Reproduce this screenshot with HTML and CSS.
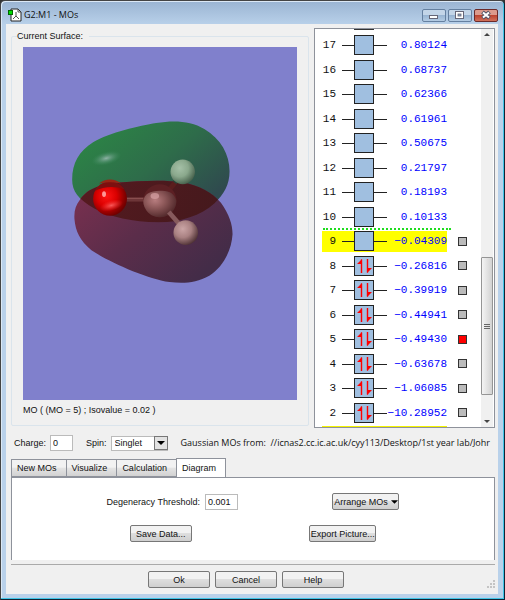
FILE: index.html
```html
<!DOCTYPE html>
<html lang="en">
<head>
  <meta charset="UTF-8" />
  <meta name="viewport" content="width=device-width, initial-scale=1.0" />
  <title>G2:M1 - MOs</title>
  <link rel="stylesheet" href="styles.css">
</head>
<body>

  <div class="window">
    <header class="titlebar">
      <svg class="app-icon" width="14" height="14" viewBox="0 0 14 14">
        <path d="M3 1h7l3 3v9H3z" fill="#fff" stroke="#222" />
        <path d="M10 1v3h3M8 4v4M8 8l-3 3M8 8l3 3" fill="none" stroke="#555" />
        <rect x="0.5" y="2.5" width="4" height="4" fill="#0d0" stroke="#060" />
      </svg>
      <h1>G2:M1 - MOs</h1>
      <div class="window-buttons">
        <button type="button" aria-label="Minimize">
          <svg width="12" height="10" viewBox="0 0 12 10"><rect x="1.5" y="5.5" width="8" height="3" fill="#fff" stroke="#667" /></svg>
        </button>
        <button type="button" aria-label="Maximize">
          <svg width="12" height="10" viewBox="0 0 12 10"><rect x="1.5" y="1.5" width="8" height="7" fill="#fff" stroke="#667" /><rect x="4" y="4" width="3" height="2" fill="#8ba7c4" stroke="#667" stroke-width="0.8" /></svg>
        </button>
        <button type="button" class="close" aria-label="Close">
          <svg width="12" height="10" viewBox="0 0 12 10"><path d="M2.5 2l7 6M9.5 2l-7 6" stroke="#535666" stroke-width="4" /><path d="M3 2.4l6 5.2M9 2.4l-6 5.2" stroke="#fff" stroke-width="2" /></svg>
        </button>
      </div>
    </header>

    <main class="client">
      <div class="top">
        <fieldset class="surface">
          <legend>Current Surface:</legend>
          <div class="view">
            <svg viewBox="0 0 275 353" role="img" aria-label="Molecular orbital 5">
              <defs>
                <linearGradient id="green" x1="0.1" y1="0.2" x2="0.85" y2="0.8">
                  <stop offset="0" stop-color="#2c8246" />
                  <stop offset="0.5" stop-color="#2e6c4a" />
                  <stop offset="1" stop-color="#2f4a4e" />
                </linearGradient>
                <linearGradient id="purple" x1="0" y1="0.1" x2="0.9" y2="0.8">
                  <stop offset="0" stop-color="#7a304f" />
                  <stop offset="0.5" stop-color="#5b2d4a" />
                  <stop offset="1" stop-color="#432c48" />
                </linearGradient>
                <linearGradient id="overlap" x1="0" y1="0" x2="1" y2="0.3">
                  <stop offset="0" stop-color="#571a20" />
                  <stop offset="1" stop-color="#43191c" />
                </linearGradient>
                <radialGradient id="shine">
                  <stop offset="0" stop-color="#8fb3a5" />
                  <stop offset="0.4" stop-color="#6da188" stop-opacity="0.6" />
                  <stop offset="1" stop-color="#3c8c5c" stop-opacity="0" />
                </radialGradient>
                <radialGradient id="oxygen" cx="0.4" cy="0.42" r="0.6">
                  <stop offset="0" stop-color="#ff1414" />
                  <stop offset="0.5" stop-color="#d90000" />
                  <stop offset="1" stop-color="#700000" />
                </radialGradient>
                <radialGradient id="glow">
                  <stop offset="0" stop-color="#ff7070" stop-opacity="0.8" />
                  <stop offset="1" stop-color="#ff3030" stop-opacity="0" />
                </radialGradient>
                <radialGradient id="carbon" cx="0.36" cy="0.36" r="0.7">
                  <stop offset="0" stop-color="#b77d7f" />
                  <stop offset="0.4" stop-color="#8f5a5b" />
                  <stop offset="1" stop-color="#4d2527" />
                </radialGradient>
                <radialGradient id="h1" cx="0.38" cy="0.35" r="0.7">
                  <stop offset="0" stop-color="#a5c0a7" />
                  <stop offset="0.5" stop-color="#8aa88c" />
                  <stop offset="1" stop-color="#425c48" />
                </radialGradient>
                <radialGradient id="h2" cx="0.38" cy="0.35" r="0.7">
                  <stop offset="0" stop-color="#cba5a6" />
                  <stop offset="0.5" stop-color="#a98182" />
                  <stop offset="1" stop-color="#4c2f32" />
                </radialGradient>
                <path id="upper" d="M67 240C67 190 88 155 130 128C180 98 270 78 320 70C375 61 425 64 465 88C515 118 541 165 541 215C541 255 524 285 495 312C455 348 390 370 325 369C250 368 180 352 135 328C85 300 67 275 67 240Z" />
                <path id="lower" d="M90 302C112 270 140 258 200 250C270 245 340 240 400 249C450 258 490 280 515 310C540 345 550 375 550 405C547 455 520 505 480 530C440 553 400 553 360 549C290 538 180 490 125 453C90 425 77 395 74 360C72 335 78 318 90 302Z" />
                <clipPath id="inUpper"><use href="#upper" /></clipPath>
              </defs>
              <g transform="translate(27 53) scale(0.3333)">
                <use href="#upper" fill="url(#green)" />
                <ellipse cx="170" cy="176" rx="46" ry="20" transform="rotate(-14 170 176)" fill="url(#shine)" />
                <use href="#lower" fill="url(#purple)" />
                <use href="#lower" fill="url(#overlap)" clip-path="url(#inUpper)" />
                <path d="M230 300h54" stroke="#6d3538" stroke-width="13" />
                <path d="M230 297h54" stroke="#8d5052" stroke-width="3" />
                <path d="M360 270l18 -22" stroke="#5a1d1d" stroke-width="15" />
                <path d="M376 250l9 -12" stroke="#284438" stroke-width="13" />
                <circle cx="400" cy="217" r="37" fill="url(#h1)" />
                <circle cx="331" cy="304" r="50" fill="#5c2024" />
                <path d="M281 304C286 283 300 275 331 274C360 272 375 282 381 304A50 50 0 0 1 281 304Z" fill="url(#carbon)" />
                <ellipse cx="316" cy="290" rx="13" ry="9" fill="#d9a3a5" opacity="0.7" />
                <path d="M358 338l32 37" stroke="#875a5c" stroke-width="14" />
                <circle cx="409" cy="400" r="37" fill="url(#h2)" />
                <circle cx="181" cy="298" r="51" fill="url(#oxygen)" />
                <path d="M136 274A51 51 0 0 1 224 270C195 258 160 262 136 274Z" fill="#7d1010" />
                <path d="M148 252A51 51 0 0 1 214 252Q181 244 148 252Z" fill="#992515" />
                <ellipse cx="163" cy="284" rx="6" ry="9" fill="#ffb0b0" opacity="0.85" />
                <ellipse cx="185" cy="318" rx="36" ry="16" transform="rotate(-15 185 318)" fill="url(#glow)" />
              </g>
            </svg>
          </div>
          <p class="caption">MO ( (MO = 5) ; Isovalue = 0.02 )</p>
        </fieldset>

        <div class="orbitals">
          <div class="list">
            <div class="cut-top"></div>
            <ul id="moList"></ul>
            <div class="cut-bottom"></div>
          </div>
          <div class="scrollbar">
            <svg width="12" height="12" viewBox="0 0 12 12"><path d="M3 7l3 -3l3 3z" fill="#444" /></svg>
            <div class="thumb"><i></i><i></i><i></i></div>
            <svg width="12" height="12" viewBox="0 0 12 12"><path d="M3 5l3 3l3 -3z" fill="#444" /></svg>
          </div>
        </div>
      </div>

      <div class="state">
        <label for="charge">Charge:</label>
        <input type="text" id="charge" class="charge" value="0" />
        <label for="spin">Spin:</label>
        <div class="combo">
          <select id="spin">
            <option>Singlet</option>
            <option>Triplet</option>
          </select>
          <span class="arrow"><svg width="8" height="4" viewBox="0 0 8 4"><path d="M0 0h8l-4 4z" /></svg></span>
        </div>
        <p class="source">Gaussian MOs from:&nbsp; //icnas2.cc.ic.ac.uk/cyy113/Desktop/1st year lab/Johr</p>
      </div>

      <div class="tabs" role="tablist">
        <button type="button" role="tab">New MOs</button>
        <button type="button" role="tab">Visualize</button>
        <button type="button" role="tab">Calculation</button>
        <button type="button" role="tab" class="active" aria-selected="true">Diagram</button>
      </div>
      <section class="panel">
        <div class="panel-row">
          <div class="field">
            <label for="threshold">Degeneracy Threshold:</label>
            <input type="text" id="threshold" class="threshold" value="0.001" />
          </div>
          <button type="button" class="btn wide">Arrange MOs <svg width="7" height="4" viewBox="0 0 8 4"><path d="M0 0h8l-4 4z" /></svg></button>
        </div>
        <div class="panel-row">
          <button type="button" class="btn">Save Data...</button>
          <button type="button" class="btn wide">Export Picture...</button>
        </div>
      </section>

      <footer class="actions">
        <div class="action-buttons">
          <button type="button" class="btn">Ok</button>
          <button type="button" class="btn">Cancel</button>
          <button type="button" class="btn">Help</button>
        </div>
        <svg class="grip" width="8" height="8" viewBox="0 0 8 8"><path d="M6 0h2v2h-2zM3 3h2v2h-2zM6 3h2v2h-2zM0 6h2v2h-2zM3 6h2v2h-2zM6 6h2v2h-2z" fill="#c4c4c4" /></svg>
      </footer>
    </main>
  </div>

  <script>
    const orbitals = [
      [17, "0.80124"], [16, "0.68737"], [15, "0.62366"], [14, "0.61961"],
      [13, "0.50675"], [12, "0.21797"], [11, "0.18193"], [10, "0.10133"],
      [9, "-0.04309"], [8, "-0.26816"], [7, "-0.39919"], [6, "-0.44941"],
      [5, "-0.49430"], [4, "-0.63678"], [3, "-1.06085"], [2, "-10.28952"]
    ];
    const LUMO = 9;

    // Spin up / spin down half arrows for a filled orbital
    const electrons =
      '<path d="M19.5 17V3.5M25.5 3v13.5" stroke="#f00" stroke-width="1.4" />' +
      '<path d="M20 3v5l-5 0zM25 17v-5l5 0z" fill="#f00" />';

    const list = document.getElementById("moList");
    orbitals.forEach(function ([n, energy]) {
      const li = document.createElement("li");
      if (n === LUMO) li.className = "lumo";
      li.innerHTML =
        '<div class="level"><span class="num">' + n + '</span>' +
        '<svg width="45" height="20" viewBox="0 0 45 20">' +
        '<path d="M0 10.5h45" stroke="#222" />' +
        '<rect x="12.5" y="0.5" width="19" height="19" fill="#a0bfe0" stroke="#222" />' +
        (n < LUMO ? electrons : "") + '</svg>' +
        '<span class="energy">' + energy.replace("-", "\u2212") + '</span></div>' +
        (n <= LUMO ? '<input type="radio" name="mo" aria-label="MO ' + n + '"' + (n === 5 ? " checked" : "") + ' />' : "");
      list.appendChild(li);
    });
  </script>

</body>
</html>
```

FILE: styles.css
```css
* {
  box-sizing: border-box;
}

body {
  margin: 0;
  font-family: "Liberation Sans", Arial, sans-serif;
  font-size: 9px;
  line-height: 12px;
  color: #111;
  background: #333;
}

h1, p, ul {
  margin: 0;
  padding: 0;
}

button, input, select {
  font: inherit;
  color: inherit;
}

svg {
  display: block;
  flex: none;
}

/* Window frame */
.window {
  display: flex;
  flex-direction: column;
  min-height: 100vh;
  padding: 0 5px 5px;
  border: 1px solid #444;
  border-right-color: #123;
  border-bottom-color: #123;
  border-radius: 5px 5px 0 0;
  background: linear-gradient(#9ab4d2, #b9d1ea 24px);
  box-shadow: inset -1px -1px #3fc4e6, inset 1px 1px #dbe8f5;
}

.titlebar {
  display: flex;
  align-items: center;
  height: 23px;
  padding: 5px 1px 0 2px;
}

.titlebar h1 {
  flex: 1;
  margin-left: 2px;
  font: 9px/14px "Open Sans", sans-serif;
}

.window-buttons {
  display: flex;
  gap: 2px;
}

.window-buttons button {
  display: flex;
  align-items: center;
  justify-content: center;
  width: 24px;
  height: 13px;
  padding: 0;
  border: 1px solid #6580a0;
  border-radius: 2px;
  background: linear-gradient(#c3d5e8 45%, #98b4d2 50%, #b4cce4);
}

.window-buttons .close {
  border-color: #6b2a2a;
  background: linear-gradient(#dc9a8c 45%, #bd4430 50%, #d0705a);
}

.client {
  flex: 1;
  display: flex;
  flex-direction: column;
  padding: 4px 3px 0 5px;
  margin-right: 1px;
  background: #f0f0f0;
}

/* Surface view and orbital list */
.top {
  flex: 1;
  display: grid;
  grid-template-columns: 1fr 181px;
  gap: 5px;
}

.surface {
  display: flex;
  flex-direction: column;
  min-width: 0;
  margin: 2px 0;
  padding: 5px 11px 9px;
  border: 1px solid #dae4ec;
  border-radius: 2px;
}

.surface legend {
  padding: 0 6px 0 0;
  margin-left: -6px;
}

.view {
  flex: 1;
  background: #8080cc;
}

.view svg {
  width: 100%;
}

.caption {
  padding-top: 4px;
}

.orbitals {
  display: flex;
  padding-right: 1px;
  border: 1px solid #8e929b;
  background: #fff;
}

.list {
  flex: 1;
  display: flex;
  flex-direction: column;
  padding-left: 7px;
  font: 11px/14px "Liberation Mono", monospace;
}

.list ul {
  flex: 1;
  display: grid;
  grid-auto-rows: 1fr;
  list-style: none;
}

.cut-top {
  width: 20px;
  height: 4px;
  margin-left: 32px;
  border-top: 1px solid #333;
}

.cut-bottom {
  width: 125px;
  height: 2px;
  border-bottom: 1px solid #f4f400;
}

.list li {
  display: flex;
  align-items: center;
  gap: 11px;
}

.level {
  position: relative;
  display: flex;
  align-items: center;
  width: 125px;
  height: 21px;
}

.lumo .level {
  background: #ff0;
}

/* HOMO-LUMO gap marker */
.lumo .level::before {
  content: "";
  position: absolute;
  top: -3px;
  left: 1px;
  width: 128px;
  border-top: 2px dotted #1fdc1f;
}

.num {
  width: 14px;
  margin-right: 6px;
  text-align: right;
}

.energy {
  flex: 1;
  display: flex;
  justify-content: flex-end;
  color: #00f;
}

.list input {
  appearance: none;
  width: 9px;
  height: 9px;
  margin: 0;
  border: 1px solid #333;
  background: #bbb;
}

.list input:checked {
  background: #f00;
}

.scrollbar {
  display: flex;
  flex-direction: column;
  width: 12px;
  background: #f0f0f0;
}

.thumb {
  display: flex;
  flex-direction: column;
  align-items: center;
  justify-content: center;
  gap: 1px;
  height: 138px;
  margin-top: auto;
  margin-bottom: 20px;
  border: 1px solid #959595;
  border-radius: 1px;
  background: linear-gradient(to right, #f4f4f4, #d2d2d2);
}

.thumb i {
  width: 6px;
  height: 1px;
  background: #666;
}

/* Charge and spin */
.state {
  display: flex;
  align-items: center;
  height: 30px;
  padding-left: 3px;
  white-space: nowrap;
}

input[type="text"] {
  height: 16px;
  padding: 0 2px;
  border: 1px solid #bbb;
  background: #fff;
}

.charge {
  width: 23px;
  margin: 0 13px 0 4px;
}

.combo {
  display: flex;
  align-items: center;
  width: 57px;
  height: 15px;
  margin: 0 13px 0 4px;
  border: 1px solid #bbb;
  background: #fff;
}

.combo select {
  appearance: none;
  flex: 1;
  min-width: 0;
  padding: 0 3px;
  border: 0;
  background: none;
}

.arrow {
  display: flex;
  align-items: center;
  justify-content: center;
  width: 14px;
  height: 14px;
  margin-right: -1px;
  border: 1px solid #777;
  background: #e2e2e2;
}

.source {
  flex: 1;
  font: 9px/14px "Open Sans", sans-serif;
}

/* Tabs */
.tabs {
  display: flex;
  align-items: flex-end;
  height: 19px;
}

.tabs button {
  height: 18px;
  padding: 0 9px 0 5px;
  margin-right: -1px;
  border: 1px solid #8e929b;
  background: linear-gradient(#f2f2f2 45%, #e4e4e4 50%, #d2d2d2);
}

.tabs .active {
  height: 20px;
  padding-bottom: 2px;
  margin-bottom: -1px;
  border-bottom: 0;
  background: #fff;
}

.panel {
  display: flex;
  flex-direction: column;
  gap: 15px;
  padding: 15px 0 18px;
  border: 1px solid #8e929b;
  border-bottom: 0;
  background: #fff;
}

.panel-row {
  display: flex;
  justify-content: space-evenly;
  align-items: center;
}

.field {
  display: flex;
  align-items: center;
  gap: 5px;
}

.threshold {
  width: 33px;
}

.btn {
  display: flex;
  align-items: center;
  justify-content: center;
  gap: 3px;
  width: 62px;
  height: 17px;
  padding: 0;
  border: 1px solid #777;
  border-radius: 2px;
  background: linear-gradient(#f2f2f2 45%, #dedede 50%, #cfcfcf);
  white-space: nowrap;
}

.btn.wide {
  width: 67px;
}

/* Bottom buttons */
.actions {
  display: flex;
  align-items: flex-end;
  margin-top: 4px;
  padding: 6px 0 6px;
  border-top: 1px solid #aaa;
}

.action-buttons {
  flex: 1;
  display: flex;
  justify-content: center;
  gap: 5px;
}

.grip {
  margin-left: 6px;
}
```
